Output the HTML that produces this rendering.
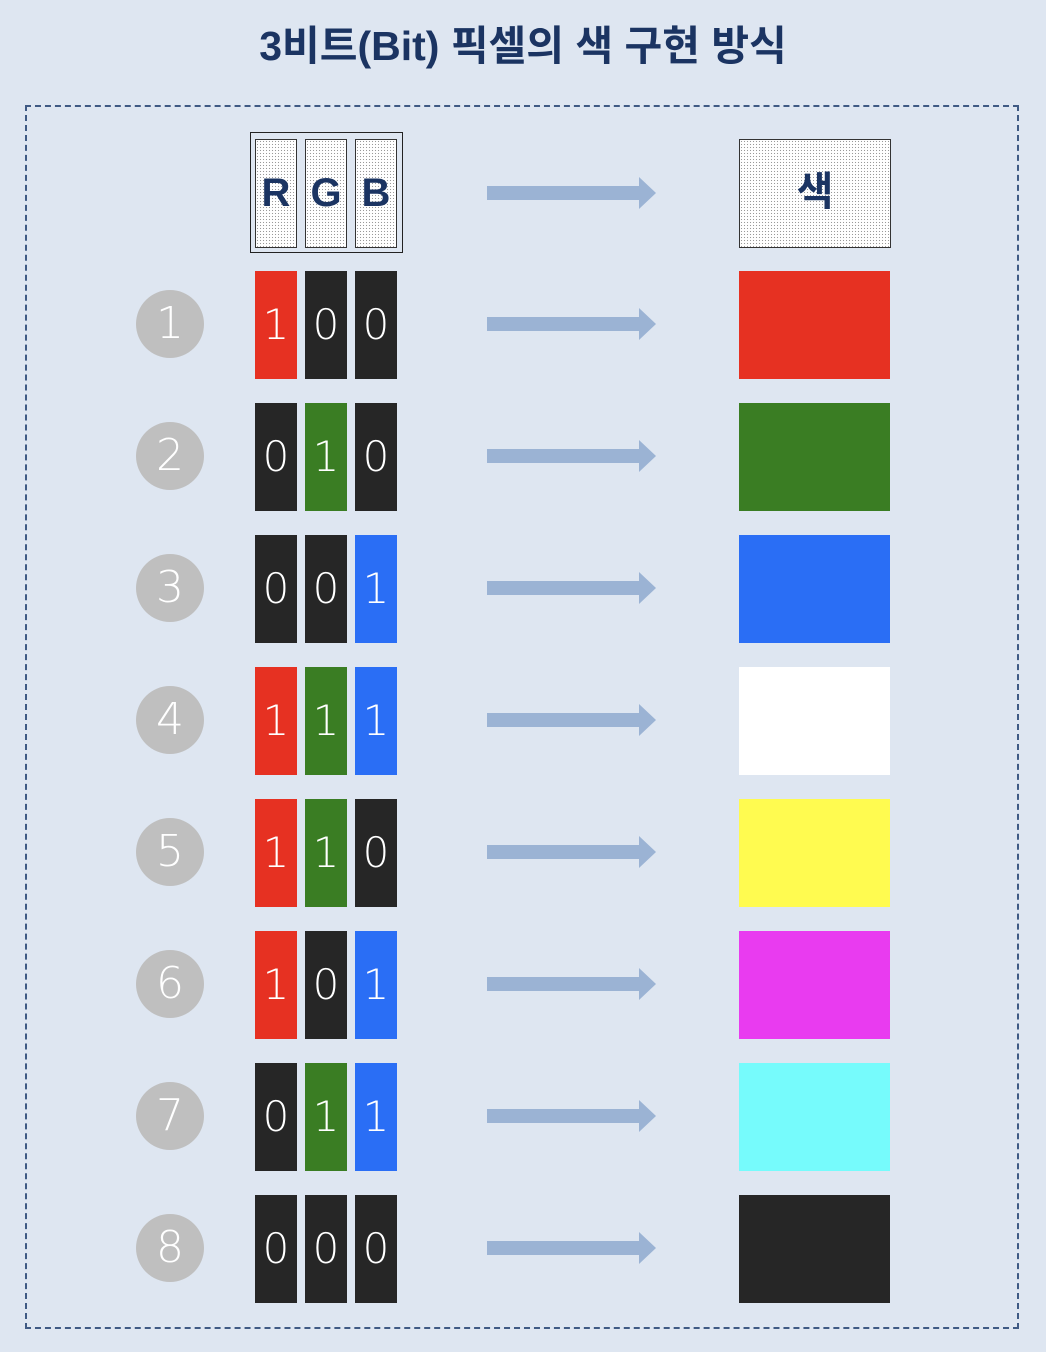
<!DOCTYPE html>
<html><head><meta charset="utf-8"><style>
body{margin:0;width:1046px;height:1352px;background:#dee6f1;position:relative;overflow:hidden;font-family:"Liberation Sans","Noto Sans CJK KR",sans-serif}
.t{position:absolute;left:0;width:1046px;top:12px;text-align:center;font-size:41px;font-weight:bold;color:#1b3462;letter-spacing:0px;font-family:"Liberation Sans","Noto Sans CJK KR",sans-serif}
.frame{position:absolute;left:25px;top:105px;width:990px;height:1220px;border:2px dashed #3f5a84}
.a{position:absolute}
.dot{background-color:#fff;background-image:radial-gradient(#999 0.6px,transparent 0.8px);background-size:3px 3px;border:1.5px solid #333;box-sizing:border-box}
.c{position:absolute;width:42px;height:108px;color:#fff;font-family:"DejaVu Sans","Liberation Sans",sans-serif;font-weight:200;font-size:42px;line-height:108px;text-align:center}
.R{background:#e63122}.G{background:#3a7d23}.B{background:#2a6ef5}.K{background:#262626}
.n{position:absolute;left:136px;width:68px;height:68px;border-radius:50%;background:#bfbfbf;color:#fff;font-family:"DejaVu Sans",sans-serif;font-weight:200;font-size:44px;line-height:68px;text-align:center}
.arr{position:absolute;left:487px;width:170px;height:32px}
.sw{position:absolute;left:739px;width:151px;height:108px}
.h{position:absolute;top:139px;width:42px;height:109px;font-size:40px;font-weight:bold;color:#1b3462;line-height:106px;text-align:center}
</style></head><body>
<div class="t">3비트(Bit) 픽셀의 색 구현 방식</div>
<div class="frame"></div>
<div class="a" style="left:250px;top:132px;width:153px;height:121px;border:1.5px solid #222;box-sizing:border-box"></div>
<div class="h dot" style="left:255px">R</div>
<div class="h dot" style="left:305px">G</div>
<div class="h dot" style="left:355px">B</div>
<div class="a dot" style="left:739px;top:139px;width:152px;height:109px;font-size:40px;font-weight:bold;color:#1b3462;text-align:center;line-height:104px">색</div>
<svg class="arr" style="top:177px" viewBox="0 0 170 32"><path d="M0 9H152V0L169 16L152 32V23H0Z" fill="#9bb3d4"/></svg>

<div class="n" style="top:290px">1</div>
<div class="c R" style="left:255px;top:271px">1</div><div class="c K" style="left:305px;top:271px">0</div><div class="c K" style="left:355px;top:271px">0</div>
<svg class="arr" style="top:308px" viewBox="0 0 170 32"><path d="M0 9H152V0L169 16L152 32V23H0Z" fill="#9bb3d4"/></svg>
<div class="sw" style="top:271px;background:#e63122"></div>

<div class="n" style="top:422px">2</div>
<div class="c K" style="left:255px;top:403px">0</div><div class="c G" style="left:305px;top:403px">1</div><div class="c K" style="left:355px;top:403px">0</div>
<svg class="arr" style="top:440px" viewBox="0 0 170 32"><path d="M0 9H152V0L169 16L152 32V23H0Z" fill="#9bb3d4"/></svg>
<div class="sw" style="top:403px;background:#3a7d23"></div>

<div class="n" style="top:554px">3</div>
<div class="c K" style="left:255px;top:535px">0</div><div class="c K" style="left:305px;top:535px">0</div><div class="c B" style="left:355px;top:535px">1</div>
<svg class="arr" style="top:572px" viewBox="0 0 170 32"><path d="M0 9H152V0L169 16L152 32V23H0Z" fill="#9bb3d4"/></svg>
<div class="sw" style="top:535px;background:#2a6ef5"></div>

<div class="n" style="top:686px">4</div>
<div class="c R" style="left:255px;top:667px">1</div><div class="c G" style="left:305px;top:667px">1</div><div class="c B" style="left:355px;top:667px">1</div>
<svg class="arr" style="top:704px" viewBox="0 0 170 32"><path d="M0 9H152V0L169 16L152 32V23H0Z" fill="#9bb3d4"/></svg>
<div class="sw" style="top:667px;background:#ffffff"></div>

<div class="n" style="top:818px">5</div>
<div class="c R" style="left:255px;top:799px">1</div><div class="c G" style="left:305px;top:799px">1</div><div class="c K" style="left:355px;top:799px">0</div>
<svg class="arr" style="top:836px" viewBox="0 0 170 32"><path d="M0 9H152V0L169 16L152 32V23H0Z" fill="#9bb3d4"/></svg>
<div class="sw" style="top:799px;background:#fffb50"></div>

<div class="n" style="top:950px">6</div>
<div class="c R" style="left:255px;top:931px">1</div><div class="c K" style="left:305px;top:931px">0</div><div class="c B" style="left:355px;top:931px">1</div>
<svg class="arr" style="top:968px" viewBox="0 0 170 32"><path d="M0 9H152V0L169 16L152 32V23H0Z" fill="#9bb3d4"/></svg>
<div class="sw" style="top:931px;background:#e93bf0"></div>

<div class="n" style="top:1082px">7</div>
<div class="c K" style="left:255px;top:1063px">0</div><div class="c G" style="left:305px;top:1063px">1</div><div class="c B" style="left:355px;top:1063px">1</div>
<svg class="arr" style="top:1100px" viewBox="0 0 170 32"><path d="M0 9H152V0L169 16L152 32V23H0Z" fill="#9bb3d4"/></svg>
<div class="sw" style="top:1063px;background:#76fbfc"></div>

<div class="n" style="top:1214px">8</div>
<div class="c K" style="left:255px;top:1195px">0</div><div class="c K" style="left:305px;top:1195px">0</div><div class="c K" style="left:355px;top:1195px">0</div>
<svg class="arr" style="top:1232px" viewBox="0 0 170 32"><path d="M0 9H152V0L169 16L152 32V23H0Z" fill="#9bb3d4"/></svg>
<div class="sw" style="top:1195px;background:#262626"></div>
</body></html>
